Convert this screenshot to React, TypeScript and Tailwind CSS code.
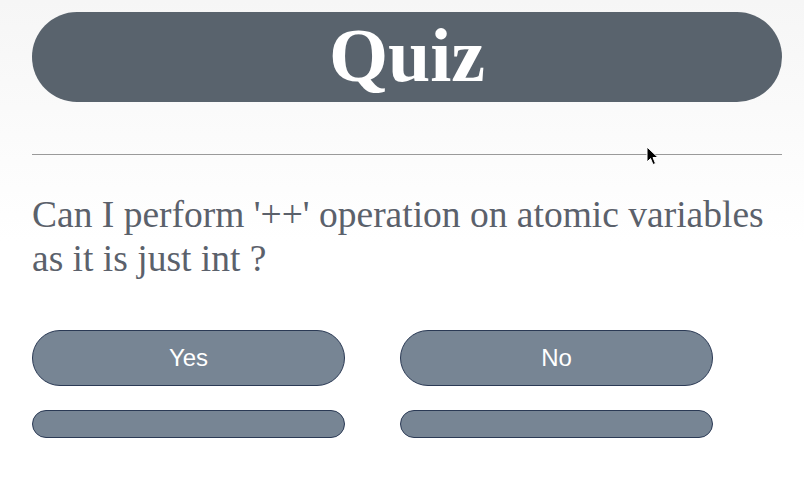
const answers = ['Yes', 'No'];

const Cursor = () => (
  <svg
    className="absolute left-[646px] top-[146px]"
    width="14"
    height="20"
    viewBox="0 0 14 20"
  >
    <path d="M1 1 L1 16 L4.5 12.5 L7 18.5 L9.5 17.5 L7 11.5 L12 11.5 Z" fill="#000" stroke="#fff" strokeWidth="1" />
  </svg>
);

const App = () => {
  return (
    <div className="relative w-[804px] h-[484px] overflow-hidden bg-gradient-to-b from-[#f6f6f6] via-white to-white pl-8 pr-[22px] pt-3">
      <header className="h-[90px] rounded-full bg-[#59636d] flex items-center justify-center">
        <h1
          className="text-[76px] font-bold text-white leading-none pb-1"
          style={{ fontFamily: '"Liberation Serif", "Times New Roman", serif' }}
        >
          Quiz
        </h1>
      </header>

      <hr className="mt-[52px] border-0 border-t border-[#9a9a9a]" />

      <p
        className="mt-[38px] text-[37.5px] leading-[44px] text-[#5b616b]"
        style={{ fontFamily: '"Liberation Serif", "Times New Roman", serif' }}
      >
        Can I perform '++' operation on atomic variables as it is just int ?
      </p>

      <div className="mt-[49px] flex flex-col gap-6">
        <div className="flex gap-[55px]">
          {answers.map(a => (
            <button
              key={a}
              className="w-[313px] h-14 rounded-full bg-[#778594] border border-[#2b3a55] text-white text-[24px]"
              style={{ fontFamily: '"Liberation Sans", Arial, sans-serif' }}
            >
              {a}
            </button>
          ))}
        </div>
        <div className="flex gap-[55px]">
          {answers.map(a => (
            <button
              key={a}
              className="w-[313px] h-7 rounded-full bg-[#778594] border border-[#2b3a55]"
            />
          ))}
        </div>
      </div>

      <Cursor />
    </div>
  );
};

export default App;
